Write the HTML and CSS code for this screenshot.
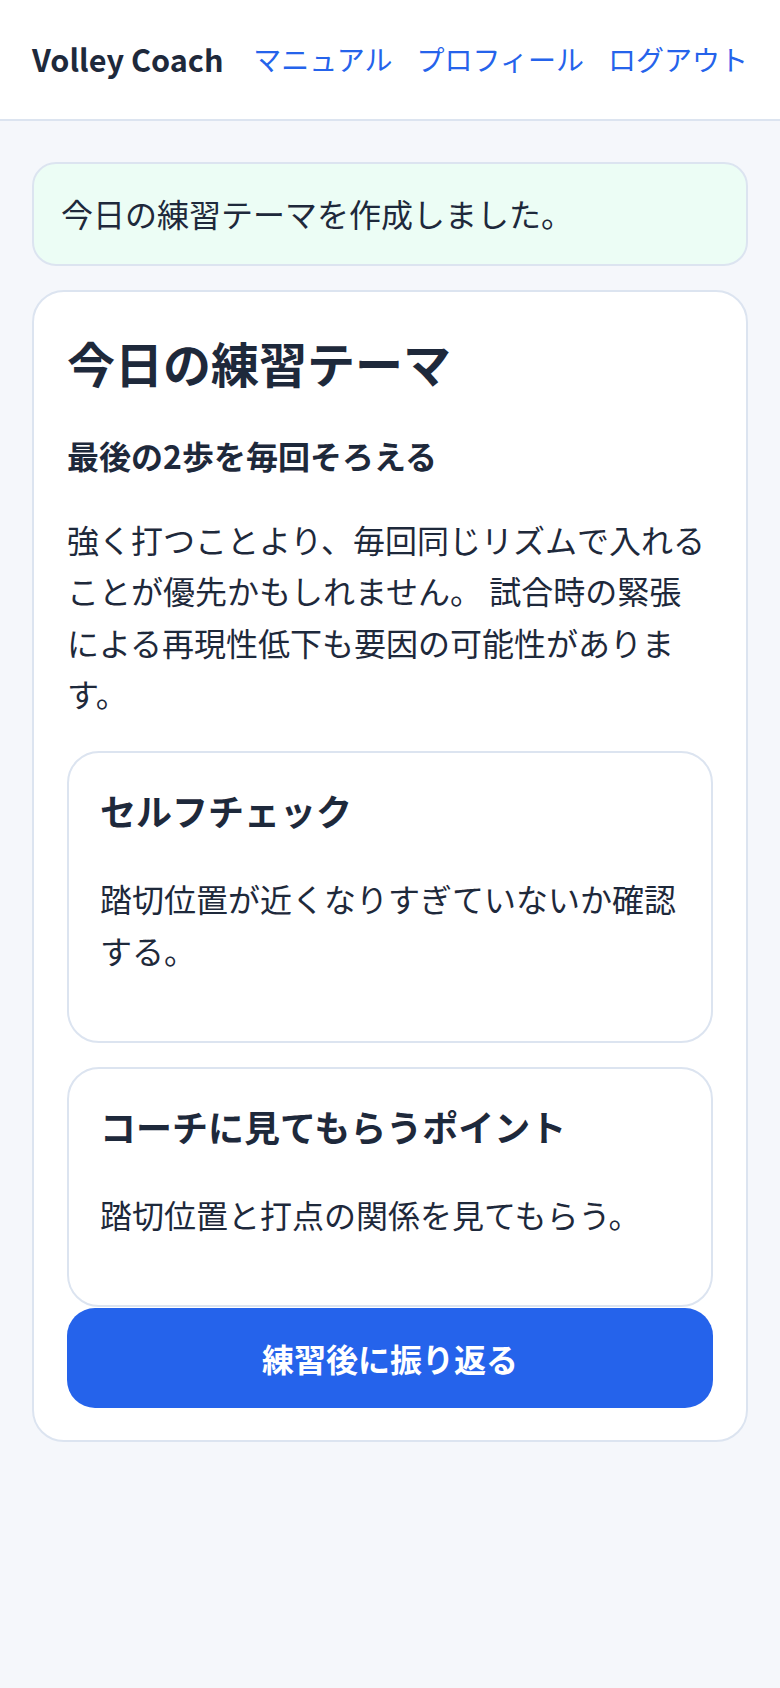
FILE: index.html
```html
<!DOCTYPE html>
<html lang="ja">
<head>
<meta charset="utf-8">
<title>Volley Coach</title>
<link rel="stylesheet" href="styles.css">
</head>
<body>
<header class="site-header">
  <div class="brand">Volley Coach</div>
  <nav class="nav">
    <a href="#" class="nav-link">マニュアル</a>
    <a href="#" class="nav-link">プロフィール</a>
    <a href="#" class="nav-link">ログアウト</a>
  </nav>
</header>
<main class="main">
  <div class="flash">今日の練習テーマを作成しました。</div>
  <section class="card">
    <h1 class="card-title">今日の練習テーマ</h1>
    <p class="theme-title">最後の2歩を毎回そろえる</p>
    <p class="theme-body">強く打つことより、毎回同じリズムで入れることが優先かもしれません。 試合時の緊張による再現性低下も要因の可能性があります。</p>
    <div class="subcards">
      <div class="subcard">
        <h3 class="subcard-title">セルフチェック</h3>
        <p class="subcard-body">踏切位置が近くなりすぎていないか確認する。</p>
      </div>
      <div class="subcard">
        <h3 class="subcard-title">コーチに見てもらうポイント</h3>
        <p class="subcard-body">踏切位置と打点の関係を見てもらう。</p>
      </div>
    </div>
    <a href="#" class="btn-primary">練習後に振り返る</a>
  </section>
</main>
</body>
</html>
```

FILE: styles.css
```css
* {
  box-sizing: border-box;
}

html, body {
  margin: 0;
  padding: 0;
}

body {
  background: #f5f7fb;
  color: #1e293b;
  font-family: "Noto Sans CJK JP", "Noto Sans", sans-serif;
  font-size: 32px;
  line-height: 1.6;
}

.site-header {
  background: #ffffff;
  border-bottom: 2px solid #dce4f0;
  height: 121px;
  padding: 0 32px 0 32px;
  display: flex;
  align-items: center;
  justify-content: space-between;
}

.brand {
  font-weight: 700;
  font-size: 30.6px;
  color: #1e293b;
}

.nav {
  display: flex;
  gap: 24px;
}

.nav-link {
  color: #2563eb;
  text-decoration: none;
  font-size: 28px;
}

.main {
  padding: 41px 32px 40px;
}

.flash {
  background: #ecfdf5;
  border: 2px solid #dce4f0;
  border-radius: 24px;
  padding: 24px 27px 25px;
  margin-bottom: 24px;
}

.card {
  background: #ffffff;
  border: 2px solid #dce4f0;
  border-radius: 32px;
  padding: 32px 33px 32px;
}

.card-title {
  margin: 0 0 29px;
  font-size: 48px;
  font-weight: 700;
  line-height: 1.6;
}

.theme-title {
  margin: 0;
  font-weight: 700;
}

.theme-body {
  margin: 33px 0 32px;
}

.subcards {
  display: flex;
  flex-direction: column;
  gap: 24px;
}

.subcard {
  border: 2px solid #dce4f0;
  border-radius: 32px;
  padding: 32px 31px 33px;
}

.subcard-title {
  margin: 0 0 38px;
  font-size: 36px;
  font-weight: 700;
  line-height: 1.4;
}

.subcard-body {
  margin: 0 0 32px;
}

.btn-primary {
  display: flex;
  align-items: center;
  justify-content: center;
  margin-top: 1px;
  height: 100px;
  background: #2563eb;
  color: #ffffff;
  font-weight: 700;
  text-decoration: none;
  border-radius: 28px;
}
```
